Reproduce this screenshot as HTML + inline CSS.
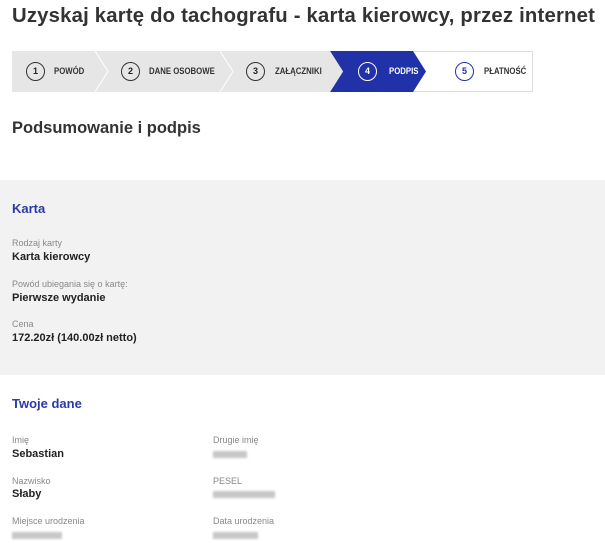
<!DOCTYPE html>
<html><head><meta charset="utf-8"><style>
body{margin:0;width:605px;height:554px;overflow:hidden;background:#fff;font-family:"Liberation Sans",sans-serif;color:#222}
h1{position:absolute;left:12px;top:5px;margin:0;font-size:20.3px;font-weight:bold;color:#333;white-space:nowrap;letter-spacing:0.2px}
.bar{position:absolute;left:12px;top:51px;width:521px;height:41px;background:#fff;border:1px solid #ddd;box-sizing:border-box}
.t{position:absolute;font-size:9.5px;font-weight:bold;top:14px;transform:scaleX(0.82);transform-origin:left;white-space:nowrap;color:#333}
.c{position:absolute;top:10px;width:17px;height:17px;border:1.2px solid #333;border-radius:50%;font-size:9px;font-weight:bold;text-align:center;line-height:17px}
h2{position:absolute;left:12px;top:119px;margin:0;font-size:16.5px;font-weight:bold;color:#333}
.gray{position:absolute;left:0;top:180px;width:605px;height:195px;background:#f2f2f2}
.h3{position:absolute;font-size:13px;font-weight:bold;color:#2b3aa8}
.l{position:absolute;font-size:9px;color:#888}
.v{position:absolute;font-size:11px;font-weight:bold;color:#222}
.blur{position:absolute;height:7px;background:#c8c8c8;filter:blur(1px)}
</style></head><body>
<h1>Uzyskaj kartę do tachografu - karta kierowcy, przez internet</h1>
<div class="bar">
<svg width="521" height="41" style="position:absolute;left:-1px;top:-1px">
<polygon points="0,0 318,0 318,41 0,41" fill="#e6e6e6"/>
<polyline points="83,0 96,20.5 83,41" fill="none" stroke="#fff" stroke-width="1"/>
<polyline points="208,0 221,20.5 208,41" fill="none" stroke="#fff" stroke-width="1"/>
<polygon points="318,0 401,0 414,20.5 401,41 318,41 331,20.5" fill="#2131a8"/>
<polygon points="307,0 318,0 331,20.5 318,41 307,41" fill="#e6e6e6"/>
</svg>
<div class="c" style="left:13px">1</div><div class="t" style="left:41px">POWÓD</div>
<div class="c" style="left:108px">2</div><div class="t" style="left:136px">DANE OSOBOWE</div>
<div class="c" style="left:233px">3</div><div class="t" style="left:262px">ZAŁĄCZNIKI</div>
<div class="c" style="left:345px;border-color:#fff;color:#fff">4</div><div class="t" style="left:376px;color:#fff">PODPIS</div>
<div class="c" style="left:442px;border-color:#2131a8;color:#2131a8">5</div><div class="t" style="left:471px">PŁATNOŚĆ</div>
</div>
<h2>Podsumowanie i podpis</h2>
<div class="gray"></div>
<div class="h3" style="left:12px;top:201px">Karta</div>
<div class="l" style="left:12px;top:238px">Rodzaj karty</div>
<div class="v" style="left:12px;top:251px">Karta kierowcy</div>
<div class="l" style="left:12px;top:279px">Powód ubiegania się o kartę:</div>
<div class="v" style="left:12px;top:292px">Pierwsze wydanie</div>
<div class="l" style="left:12px;top:319px">Cena</div>
<div class="v" style="left:12px;top:332px">172.20zł (140.00zł netto)</div>
<div class="h3" style="left:12px;top:396px">Twoje dane</div>
<div class="l" style="left:12px;top:435px">Imię</div>
<div class="v" style="left:12px;top:448px">Sebastian</div>
<div class="l" style="left:12px;top:476px">Nazwisko</div>
<div class="v" style="left:12px;top:488px">Słaby</div>
<div class="l" style="left:12px;top:516px">Miejsce urodzenia</div>
<div class="blur" style="left:12px;top:532px;width:50px"></div>
<div class="l" style="left:213px;top:435px">Drugie imię</div>
<div class="blur" style="left:213px;top:451px;width:34px"></div>
<div class="l" style="left:213px;top:476px">PESEL</div>
<div class="blur" style="left:213px;top:491px;width:62px"></div>
<div class="l" style="left:213px;top:516px">Data urodzenia</div>
<div class="blur" style="left:213px;top:532px;width:45px"></div>
</body></html>
